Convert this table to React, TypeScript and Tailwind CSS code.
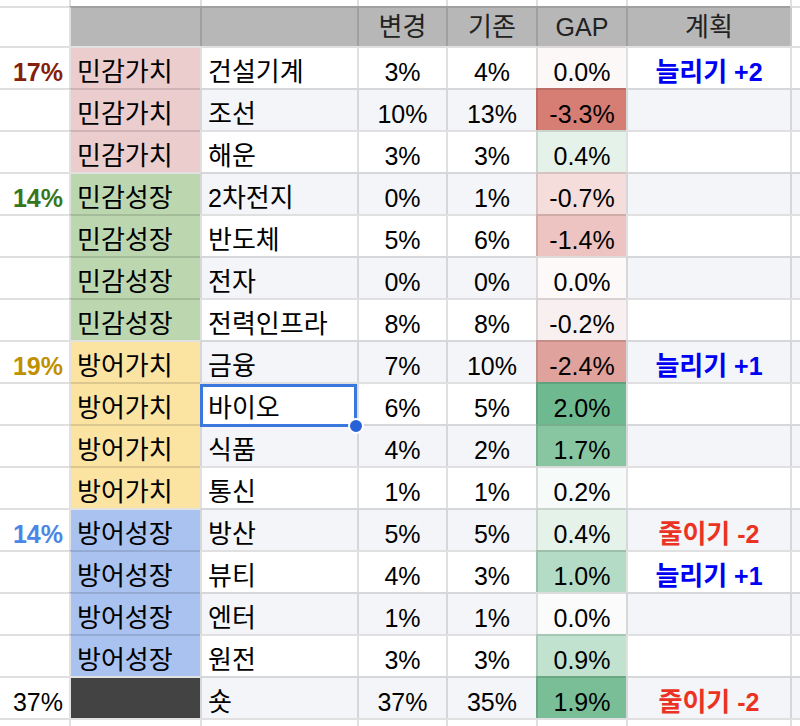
import React, { Fragment } from "react";

const GRID = "grid grid-cols-[69px_131px_157px_89px_90px_90px_164px_10px]";
const FONT = "font-['Liberation_Sans','Noto_Sans_CJK_KR',sans-serif]";
const BT = "border-t-2 border-t-black/[0.12]";
const BL = "border-l-2 border-l-black/[0.12]";
const CELL = "flex items-end pb-[3px] leading-[25px] text-[25px] min-w-0 whitespace-pre";

function Txt({ s }: { s: string }) {
  const parts = s.split(/([\uAC00-\uD7A3]+)/).filter((p) => p.length > 0);
  return (
    <span>
      {parts.map((p, i) =>
        /[\uAC00-\uD7A3]/.test(p) ? (
          <span key={i} className="text-[26px] leading-none">
            {p}
          </span>
        ) : (
          <Fragment key={i}>{p}</Fragment>
        )
      )}
    </span>
  );
}

type Row = {
  pct?: string;
  pctCls?: string;
  cat: string;
  catCls: string;
  name: string;
  a: string;
  b: string;
  gap: string;
  gapCls: string;
  plan?: string;
  planCls?: string;
  sameCat: boolean;
  selected?: boolean;
};

const PINK = "bg-[#ebcdcd]";
const GREEN = "bg-[#bcd7b0]";
const YELLOW = "bg-[#fbe4a2]";
const BLUE = "bg-[#a9c2ef]";
const DARK = "bg-[#434343]";
const PBLUE = "text-[#0000f5] font-bold";
const PRED = "text-[#ea3323] font-bold";

const rows: Row[] = [
  { pct: "17%", pctCls: "text-[#85200c] font-bold", cat: "민감가치", catCls: PINK, name: "건설기계", a: "3%", b: "4%", gap: "0.0%", gapCls: "bg-[#fdf8f8]", plan: "늘리기 +2", planCls: PBLUE, sameCat: false },
  { cat: "민감가치", catCls: PINK, name: "조선", a: "10%", b: "13%", gap: "-3.3%", gapCls: "bg-[#d67d74]", sameCat: true },
  { cat: "민감가치", catCls: PINK, name: "해운", a: "3%", b: "3%", gap: "0.4%", gapCls: "bg-[#e5f2e9]", sameCat: true },
  { pct: "14%", pctCls: "text-[#38761d] font-bold", cat: "민감성장", catCls: GREEN, name: "2차전지", a: "0%", b: "1%", gap: "-0.7%", gapCls: "bg-[#f4dddb]", sameCat: false },
  { cat: "민감성장", catCls: GREEN, name: "반도체", a: "5%", b: "6%", gap: "-1.4%", gapCls: "bg-[#edc4c1]", sameCat: true },
  { cat: "민감성장", catCls: GREEN, name: "전자", a: "0%", b: "0%", gap: "0.0%", gapCls: "bg-[#fdf9f9]", sameCat: true },
  { cat: "민감성장", catCls: GREEN, name: "전력인프라", a: "8%", b: "8%", gap: "-0.2%", gapCls: "bg-[#f8f0f0]", sameCat: true },
  { pct: "19%", pctCls: "text-[#bf9000] font-bold", cat: "방어가치", catCls: YELLOW, name: "금융", a: "7%", b: "10%", gap: "-2.4%", gapCls: "bg-[#e0a29c]", plan: "늘리기 +1", planCls: PBLUE, sameCat: false },
  { cat: "방어가치", catCls: YELLOW, name: "바이오", a: "6%", b: "5%", gap: "2.0%", gapCls: "bg-[#6eb98f]", sameCat: true, selected: true },
  { cat: "방어가치", catCls: YELLOW, name: "식품", a: "4%", b: "2%", gap: "1.7%", gapCls: "bg-[#88c6a2]", sameCat: true },
  { cat: "방어가치", catCls: YELLOW, name: "통신", a: "1%", b: "1%", gap: "0.2%", gapCls: "bg-[#f6faf8]", sameCat: true },
  { pct: "14%", pctCls: "text-[#4a86e8] font-bold", cat: "방어성장", catCls: BLUE, name: "방산", a: "5%", b: "5%", gap: "0.4%", gapCls: "bg-[#e5f2e9]", plan: "줄이기 -2", planCls: PRED, sameCat: false },
  { cat: "방어성장", catCls: BLUE, name: "뷰티", a: "4%", b: "3%", gap: "1.0%", gapCls: "bg-[#b3dbc5]", plan: "늘리기 +1", planCls: PBLUE, sameCat: true },
  { cat: "방어성장", catCls: BLUE, name: "엔터", a: "1%", b: "1%", gap: "0.0%", gapCls: "bg-[#fbfbfb]", sameCat: true },
  { cat: "방어성장", catCls: BLUE, name: "원전", a: "3%", b: "3%", gap: "0.9%", gapCls: "bg-[#c0e2cf]", sameCat: true },
  { pct: "37%", pctCls: "text-black", cat: "", catCls: DARK, name: "숏", a: "37%", b: "35%", gap: "1.9%", gapCls: "bg-[#79be97]", plan: "줄이기 -2", planCls: PRED, sameCat: false },
];

function DataRow({ r, i }: { r: Row; i: number }) {
  const band = i % 2 === 1 ? "bg-[#f4f5f8]" : "bg-white";
  const catTop = r.sameCat ? "border-t-black/[0.12]" : "border-t-[#e1e1e1]";
  return (
    <div className={`${GRID} h-[42px] text-black`}>
      <div className={`${CELL} ${BT} bg-white justify-end pr-[6px] ${r.pctCls ?? ""}`}>{r.pct ?? ""}</div>
      <div className={`${CELL} border-t-2 border-l-2 ${catTop} border-l-[#e1e1e1] ${r.catCls} pl-[6px]`}>
        <Txt s={r.cat} />
      </div>
      <div className={`${CELL} ${BT} ${BL} ${band} pl-[6px] relative`}>
        <Txt s={r.name} />
        {r.selected && (
          <div className="absolute -left-[2px] top-0 right-0 -bottom-[3px] border-[3px] border-[#3a78e0] z-10 pointer-events-none">
            <div className="absolute -right-[10px] -bottom-[10px] w-[16px] h-[16px] rounded-full bg-[#2962d6] border-2 border-white" />
          </div>
        )}
      </div>
      <div className={`${CELL} ${BT} ${BL} ${band} justify-center`}>{r.a}</div>
      <div className={`${CELL} ${BT} ${BL} ${band} justify-center`}>{r.b}</div>
      <div className={`${CELL} ${BT} ${BL} ${r.gapCls} justify-center`}>{r.gap}</div>
      <div className={`${CELL} ${BT} ${BL} ${band} justify-center ${r.planCls ?? ""}`}>
        {r.plan ? <Txt s={r.plan} /> : null}
      </div>
      <div className={`${BT} ${BL} ${band}`} />
    </div>
  );
}

export default function App() {
  const head = "bg-[#b7b7b7]";
  const hcell = "flex items-end pb-[6px] leading-[25px] text-[25px] justify-center text-[#222]";
  return (
    <div className={`w-[800px] h-[726px] overflow-hidden bg-white ${FONT}`}>
      {/* partial top row */}
      <div className={`${GRID} h-[6px]`}>
        <div className="bg-white" />
        <div className={`${BL} bg-white`} />
        <div className={`${BL} bg-white`} />
        <div className={`${BL} bg-white`} />
        <div className={`${BL} bg-white`} />
        <div className={`${BL} bg-white`} />
        <div className={`${BL} bg-white`} />
        <div className={`${BL} bg-white`} />
      </div>
      {/* header */}
      <div className={`${GRID} h-[40px]`}>
        <div className={`${BT} bg-white`} />
        <div className={`border-t-2 border-l-2 border-t-black/[0.12] border-l-[#e1e1e1] ${head}`} />
        <div className={`${BT} ${BL} ${head}`} />
        <div className={`${BT} ${BL} ${head} ${hcell}`}>
          <Txt s="변경" />
        </div>
        <div className={`${BT} ${BL} ${head} ${hcell}`}>
          <Txt s="기존" />
        </div>
        <div className={`${BT} ${BL} ${head} ${hcell}`}>GAP</div>
        <div className={`${BT} ${BL} ${head} ${hcell}`}>
          <Txt s="계획" />
        </div>
        <div className={`${BT} border-l-2 border-l-[#c9c9c9] bg-white`} />
      </div>
      {rows.map((r, i) => (
        <DataRow key={i} r={r} i={i} />
      ))}
      {/* partial bottom row */}
      <div className={`${GRID} h-[8px]`}>
        <div className={`${BT} bg-white`} />
        <div className={`border-t-2 border-l-2 border-t-[#e1e1e1] border-l-[#e1e1e1] bg-white`} />
        <div className={`${BT} ${BL} bg-white`} />
        <div className={`${BT} ${BL} bg-white`} />
        <div className={`${BT} ${BL} bg-white`} />
        <div className={`${BT} ${BL} bg-white`} />
        <div className={`${BT} ${BL} bg-white`} />
        <div className={`${BT} ${BL} bg-white`} />
      </div>
    </div>
  );
}
